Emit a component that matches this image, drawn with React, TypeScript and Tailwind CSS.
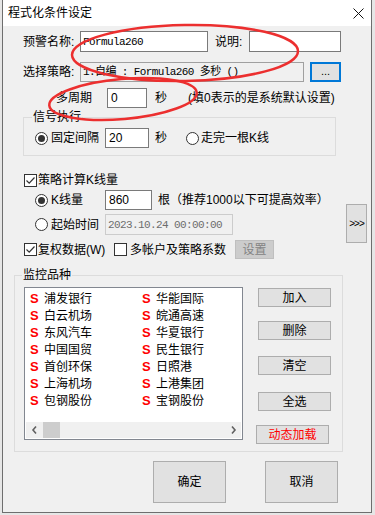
import React from "react";

const cjk = "font-['Liberation_Sans','Noto_Sans_CJK_SC',sans-serif]";
const mono = "font-['Liberation_Mono','Noto_Sans_CJK_SC',monospace]";

const Radio = ({ checked = false }: { checked?: boolean }) => (
  <span className="flex h-[13px] w-[13px] shrink-0 items-center justify-center rounded-full border border-[#333] bg-white">
    {checked && <span className="h-[7px] w-[7px] rounded-full bg-[#333]" />}
  </span>
);

const Check = ({ checked = false }: { checked?: boolean }) => (
  <span className="flex h-[13px] w-[13px] shrink-0 items-center justify-center border border-[#333] bg-white">
    {checked && (
      <svg width="11" height="11" viewBox="0 0 11 11">
        <path d="M1.5 5.5 L4.2 8.2 L9.5 2.5" fill="none" stroke="#333" strokeWidth="1.2" />
      </svg>
    )}
  </span>
);

const Btn = ({ label, className = "" }: { label: string; className?: string }) => (
  <div
    className={
      "flex items-center justify-center border border-[#adadad] bg-[#e1e1e1] text-[12px] leading-[14px] text-black " +
      className
    }
  >
    {label}
  </div>
);

const stocks = [
  ["浦发银行", "华能国际"],
  ["白云机场", "皖通高速"],
  ["东风汽车", "华夏银行"],
  ["中国国贸", "民生银行"],
  ["首创环保", "日照港"],
  ["上海机场", "上港集团"],
  ["包钢股份", "宝钢股份"],
];

export default function App() {
  return (
    <div className={"relative h-[515px] w-[375px] overflow-hidden bg-[#e6e6e6] text-[12px] leading-[14px] text-black " + cjk}>
      <div className="ml-[2px] flex h-[513px] w-[370px] flex-col border-x border-b border-[#6e6e6e] bg-[#f0f0f0]">
        {/* title bar */}
        <div className="flex h-[26px] shrink-0 items-center justify-between bg-white pl-[5px] pr-[7px]">
          <span className="text-[12px]">程式化条件设定</span>
          <svg width="11" height="11" viewBox="0 0 11 11">
            <path d="M0.5 0.5 L10.5 10.5 M10.5 0.5 L0.5 10.5" stroke="#111" strokeWidth="1" />
          </svg>
        </div>

        <div className="flex flex-col pl-[20px]">
          {/* row 1 */}
          <div className="mt-[5px] flex h-[21px] items-center">
            <span className="w-[57px]">预警名称:</span>
            <div className={"flex h-[21px] w-[128px] items-center border border-[#7a7a7a] bg-white pl-[2px] text-[11px] tracking-[-0.6px] " + mono}>
              Formula260
            </div>
            <span className="ml-[7px] w-[34px]">说明:</span>
            <div className="h-[21px] w-[92px] border border-[#7a7a7a] bg-white" />
          </div>

          {/* row 2 */}
          <div className="mt-[10px] flex h-[20px] items-center">
            <span className="w-[57px]">选择策略:</span>
            <div className={"flex h-[20px] w-[224px] items-center border border-[#a0a0a0] bg-[#f0f0f0] pl-[2px] text-[11px] tracking-[-0.6px] " + mono}>
              1.自编 : Formula260 多秒 ()
            </div>
            <div className="ml-[6px] flex h-[20px] w-[31px] items-center justify-center border-2 border-[#0078d7] bg-[#e1e1e1] pb-[3px] text-[11px]">
              ...
            </div>
          </div>

          {/* row 3 */}
          <div className="mt-[6px] flex h-[20px] items-center pl-[33px]">
            <span className="w-[51px]">多周期</span>
            <div className="flex h-[20px] w-[40px] items-center border border-[#7a7a7a] bg-white pl-[3px]">0</div>
            <span className="ml-[8px] w-[12px]">秒</span>
            <span className="ml-[21px]">(填0表示的是系统默认设置)</span>
          </div>

          {/* group 信号执行 */}
          <div className="relative mt-[9px] h-[39px] w-[313px] border border-[#dcdcdc]">
            <span className="absolute left-[8px] top-[-9px] bg-[#f0f0f0] px-[1px] leading-[16px]">信号执行</span>
            <div className="flex items-center pl-[11px] pt-[10px]">
              <Radio checked />
              <span className="ml-[3px] w-[54px]">固定间隔</span>
              <div className="flex h-[20px] w-[44px] items-center border border-[#7a7a7a] bg-white pl-[3px]">20</div>
              <span className="ml-[6px] w-[12px]">秒</span>
              <span className="ml-[19px]">
                <Radio />
              </span>
              <span className="ml-[2px]">走完一根K线</span>
            </div>
          </div>

          {/* 策略计算K线量 */}
          <div className="mt-[14px] flex h-[20px] items-center pl-[1px]">
            <Check checked />
            <span className="ml-[1px]">策略计算K线量</span>
          </div>

          <div className="flex">
            <div className="flex w-[323px] flex-col">
              <div className="flex h-[20px] items-center pl-[12px]">
                <Radio checked />
                <span className="ml-[3px] w-[54px]">K线量</span>
                <div className="flex h-[20px] w-[47px] items-center border border-[#7a7a7a] bg-white pl-[3px]">860</div>
                <span className="ml-[6px]">根（推荐1000以下可提高效率）</span>
              </div>
              <div className="mt-[4px] flex h-[21px] items-center pl-[12px]">
                <Radio />
                <span className="ml-[3px] w-[54px]">起始时间</span>
                <div className={"flex h-[21px] w-[128px] items-center border border-[#cccccc] bg-[#f0f0f0] pl-[2px] text-[11px] tracking-[-0.6px] text-[#6d6d6d] " + mono}>
                  2023.10.24 00:00:00
                </div>
              </div>
              <div className="mt-[5px] flex h-[19px] items-center pl-[1px]">
                <Check checked />
                <span className="ml-[1px] w-[76px]">复权数据(W)</span>
                <Check />
                <span className="ml-[3px] w-[105px]">多帐户及策略系数</span>
                <div className="flex h-[19px] w-[39px] items-center justify-center border border-[#bfbfbf] bg-[#cccccc] text-[#838383]">
                  设置
                </div>
              </div>
            </div>
            <div className="mt-[14px] flex h-[39px] w-[21px] items-center justify-center border border-[#adadad] bg-[#e1e1e1] text-[10px] tracking-[-1px]">
              &gt;&gt;&gt;
            </div>
          </div>

          {/* group 监控品种 */}
          <div className="relative ml-[-9px] mt-[16px] h-[177px] w-[329px] border border-[#dcdcdc]">
            <span className="absolute left-[7px] top-[-9px] bg-[#f0f0f0] px-[1px] leading-[16px]">监控品种</span>
            <div className="flex pl-[9px] pt-[11px]">
              <div className="flex h-[153px] w-[219px] flex-col border border-[#828790] bg-white">
                <div className="flex flex-col pl-[5px] pt-[2px]">
                  {stocks.map(([a, b]) => (
                    <div key={a} className="flex h-[17px] items-center">
                      <div className="flex w-[112px] items-center">
                        <span className="w-[14px] font-['Liberation_Sans'] text-[13px] font-bold text-[#ff0000]">S</span>
                        <span>{a}</span>
                      </div>
                      <div className="flex items-center">
                        <span className="w-[14px] font-['Liberation_Sans'] text-[13px] font-bold text-[#ff0000]">S</span>
                        <span>{b}</span>
                      </div>
                    </div>
                  ))}
                </div>
                <div className="mx-[1px] mb-[1px] mt-auto flex h-[16px] items-center bg-[#f0f0f0]">
                  <svg width="16" height="16" viewBox="0 0 16 16" className="ml-[1px]">
                    <path d="M9 4.5 L6 8 L9 11.5" fill="none" stroke="#606060" strokeWidth="1.6" />
                  </svg>
                  <div className="h-[16px] w-[17px] bg-[#cdcdcd]" />
                  <svg width="16" height="16" viewBox="0 0 16 16" className="ml-auto">
                    <path d="M7 4.5 L10 8 L7 11.5" fill="none" stroke="#606060" strokeWidth="1.6" />
                  </svg>
                </div>
              </div>
              <div className="ml-[15px] flex flex-col">
                <Btn label="加入" className="mt-[1px] h-[19px] w-[73px]" />
                <Btn label="删除" className="mt-[14px] h-[19px] w-[73px]" />
                <Btn label="清空" className="mt-[16px] h-[19px] w-[73px]" />
                <Btn label="全选" className="mt-[17px] h-[19px] w-[73px]" />
                <Btn label="动态加载" className="ml-[-2px] mt-[14px] h-[19px] w-[73px] !text-[#ff0000]" />
              </div>
            </div>
          </div>

          {/* bottom buttons */}
          <div className="mt-[9px] flex">
            <Btn label="确定" className="ml-[130px] h-[42px] w-[73px]" />
            <Btn label="取消" className="ml-[39px] h-[42px] w-[73px]" />
          </div>
        </div>
      </div>

      {/* red annotation ellipses */}
      <svg className="pointer-events-none absolute left-0 top-0" width="375" height="515" viewBox="0 0 375 515">
        <ellipse cx="185" cy="53" rx="113" ry="28" fill="none" stroke="#ec2f2f" strokeWidth="2.5" transform="rotate(-1 185 53)" />
        <ellipse cx="123" cy="99" rx="74" ry="20" fill="none" stroke="#ec2f2f" strokeWidth="2.5" transform="rotate(-5 123 99)" />
      </svg>
    </div>
  );
}
